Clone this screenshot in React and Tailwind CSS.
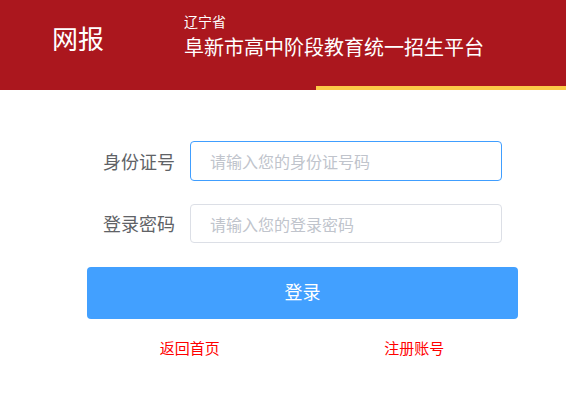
import React, { useState } from 'react';

const font = { fontFamily: '"Noto Sans CJK SC", "Noto Sans", sans-serif' };

const App = () => {
  const [form, setForm] = useState({ idCard: '', password: '' });

  return (
    <div className="min-h-[400px] w-[566px] bg-white" style={font}>
      <header className="flex h-[90px] flex-col bg-[#ab171e]">
        <div className="flex flex-1 items-start">
          <div className="w-[184px] pl-[52px] pt-[21px] text-[26px] leading-[34px] text-white">网报</div>
          <div className="pt-[12px] text-white">
            <p className="text-[14px] leading-[18px]">辽宁省</p>
            <p className="mt-[4px] text-[20px] leading-[26px]">阜新市高中阶段教育统一招生平台</p>
          </div>
        </div>
        <div className="flex justify-end">
          <div className="h-[4px] w-[250px] bg-[#fcc948]" />
        </div>
      </header>

      <form className="ml-[87px] mt-[51px] w-[431px]" onSubmit={(e) => e.preventDefault()}>
        <div className="flex items-center">
          <label className="w-[103px] pr-[15px] text-right text-[18px] text-[#606266]">身份证号</label>
          <input
            value={form.idCard}
            onChange={(e) => setForm({ ...form, idCard: e.target.value })}
            className="h-[40px] w-[312px] rounded-[4px] border border-[#409eff] px-[19px] text-[16px] text-[#606266] outline-none placeholder:text-[#c0c4cc]"
            placeholder="请输入您的身份证号码"
          />
        </div>
        <div className="mt-[23px] flex items-center">
          <label className="w-[103px] pr-[15px] text-right text-[18px] text-[#606266]">登录密码</label>
          <input
            type="password"
            value={form.password}
            onChange={(e) => setForm({ ...form, password: e.target.value })}
            className="h-[39px] w-[312px] rounded-[4px] border border-[#dcdfe6] px-[19px] text-[16px] text-[#606266] outline-none placeholder:text-[#c0c4cc]"
            placeholder="请输入您的登录密码"
          />
        </div>
        <button className="mt-[24px] h-[52px] w-full rounded-[4px] bg-[#42a0ff] pb-[3px] text-[18px] text-white">
          登录
        </button>
        <div className="mt-[19px] grid grid-cols-2 text-center text-[15px] leading-[20px] text-[#ff0000]">
          <a className="pr-[10px]">返回首页</a>
          <a className="pl-[8px]">注册账号</a>
        </div>
      </form>
    </div>
  );
};

export default App;
